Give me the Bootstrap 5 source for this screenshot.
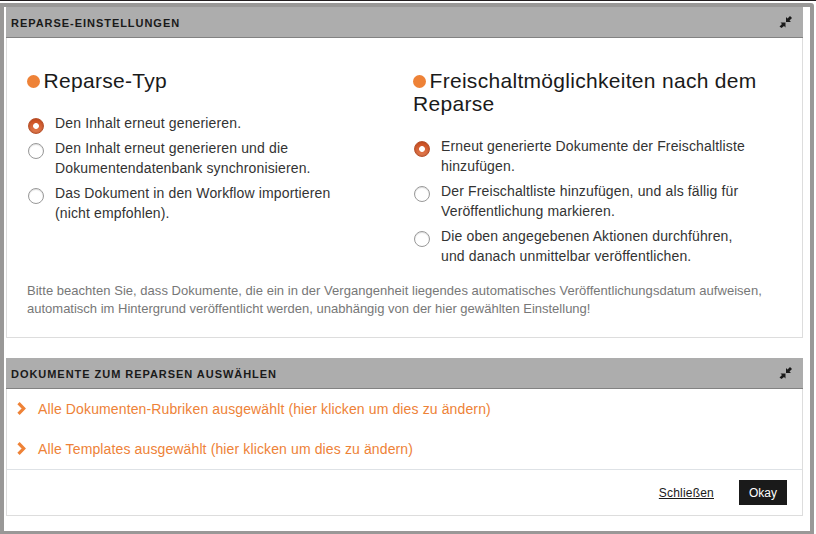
<!DOCTYPE html>
<html lang="de">
<head>
<meta charset="utf-8">
<title>Reparse-Einstellungen</title>
<link href="https://cdn.jsdelivr.net/npm/bootstrap@5.3.0/dist/css/bootstrap.min.css" rel="stylesheet">
<style>
body{font:14px/20px "Liberation Sans",Arial,sans-serif;color:#333;background:#fff;height:534px;overflow:hidden;border-top:1px solid #231f20;padding-top:2px}
.frame{width:814px;height:531px;border:4px solid #999897;border-bottom-width:3px;border-top-right-radius:3px;padding:0 7px 0 2px}
.panel-head{height:31px;background:#adadad;border-bottom:1px solid #828282;padding:1px 11px 0 5px}
.panel-head h2{font-size:11px;line-height:16px;letter-spacing:.96px;color:#1a1a1a;padding-top:1px}
.panel-head svg{margin-bottom:2px}
.panel-body{border:1px solid #ddd;border-top:0}
.settings{height:300px;padding:31px 19px 0 20px}
.choices h3{font-size:21px;line-height:23px;letter-spacing:.3px;color:#1a1a1a;margin-bottom:21px;font-weight:400}
.dot{display:inline-block;width:13px;height:13px;border-radius:50%;background:#ee8237;margin-right:3.5px;vertical-align:0}
.choice{padding-left:28px;margin-bottom:5px;min-height:20px;letter-spacing:.14px}
.choice .form-check-input{width:16px;height:16px;margin:5px 0 0 -27px;border:1px solid #999;background:#fff;box-shadow:inset 0 1px 1px #ddd}
.choice .form-check-input:checked{border-color:#b8512b;background:radial-gradient(circle,#fff 0 2.5px,transparent 3.3px),linear-gradient(#cb4c1e,#e37d51);box-shadow:inset 0 0 2px #a54925}
.hint{font-size:13px;line-height:18px;color:#777;padding-top:3px}
.hint span{letter-spacing:.03px}
.pick{color:#ee8237;height:40px;padding-left:10px;letter-spacing:.125px}
.pick svg{margin:0 12px 2px 0}
.actions{height:46px;font-size:12px;padding-right:15px}
.actions .btn{font-size:12px;line-height:15px;color:#1a1a1a}
.actions .btn-link{letter-spacing:.2px;margin:2px 25px 0 0}
.actions .btn-dark{background:#1a1a1a;color:#fff;width:48px;height:25px;border:0;padding:2px 0 0}
</style>
<script src="https://cdn.jsdelivr.net/npm/bootstrap@5.3.0/dist/js/bootstrap.bundle.min.js"></script>
</head>
<body>
<main class="frame">
<section>
<header class="panel-head d-flex align-items-center justify-content-between"><h2 class="fw-bold text-uppercase mb-0">Reparse-Einstellungen</h2>
<svg width="13" height="12" viewBox="0 0 13 12" fill="#1a1a1a"><path d="M7 1v5h5l-1.5-1.5L13 2 11 0 8.500 2.500zM1.500 6.500h5v5L5 10l-2.500 2-2-1.500L3 8z"/></svg></header>
<div class="panel-body settings">
<div class="row gx-0">
<div class="col-6 choices">
<h3><span class="dot"></span>Reparse-Typ</h3>
<label class="form-check choice d-block"><input class="form-check-input" type="radio" name="typ" checked>Den Inhalt erneut generieren.</label>
<label class="form-check choice d-block"><input class="form-check-input" type="radio" name="typ">Den Inhalt erneut generieren und die<br>Dokumentendatenbank synchronisieren.</label>
<label class="form-check choice d-block"><input class="form-check-input" type="radio" name="typ">Das Dokument in den Workflow importieren<br>(nicht empfohlen).</label>
</div>
<div class="col-6 choices ps-2">
<h3><span class="dot"></span>Freischaltmöglichkeiten nach dem<br>Reparse</h3>
<label class="form-check choice d-block"><input class="form-check-input" type="radio" name="frei" checked>Erneut generierte Dokumente der Freischaltliste<br>hinzufügen.</label>
<label class="form-check choice d-block"><input class="form-check-input" type="radio" name="frei">Der Freischaltliste hinzufügen, und als fällig für<br>Veröffentlichung markieren.</label>
<label class="form-check choice d-block"><input class="form-check-input" type="radio" name="frei">Die oben angegebenen Aktionen durchführen,<br>und danach unmittelbar veröffentlichen.</label>
</div>
</div>
<p class="hint mb-0 mt-2"><span>Bitte beachten Sie, dass Dokumente, die ein in der Vergangenheit liegendes automatisches Veröffentlichungsdatum aufweisen,</span><br>automatisch im Hintergrund veröffentlicht werden, unabhängig von der hier gewählten Einstellung!</p>
</div>
</section>
<section class="mt-1 pt-3">
<header class="panel-head d-flex align-items-center justify-content-between"><h2 class="fw-bold text-uppercase mb-0">Dokumente zum Reparsen auswählen</h2>
<svg width="13" height="12" viewBox="0 0 13 12" fill="#1a1a1a"><path d="M7 1v5h5l-1.5-1.5L13 2 11 0 8.500 2.500zM1.500 6.500h5v5L5 10l-2.500 2-2-1.500L3 8z"/></svg></header>
<div class="panel-body">
<div class="pick d-flex align-items-center"><svg width="9" height="13" viewBox="0 0 9 13" fill="none" stroke="#ee8237" stroke-width="3.2"><path d="M1.500 1.200 6.700 6.500l-5.200 5.300"/></svg>Alle Dokumenten-Rubriken ausgewählt (hier klicken um dies zu ändern)</div>
<div class="pick d-flex align-items-center"><svg width="9" height="13" viewBox="0 0 9 13" fill="none" stroke="#ee8237" stroke-width="3.2"><path d="M1.500 1.200 6.700 6.500l-5.200 5.300"/></svg>Alle Templates ausgewählt (hier klicken um dies zu ändern)</div>
<div class="actions border-top d-flex align-items-center justify-content-end"><a class="btn btn-link p-0 border-0" href="#">Schließen</a><button class="btn btn-dark rounded-0">Okay</button></div>
</div>
</section>
</main>
</body>
</html>
